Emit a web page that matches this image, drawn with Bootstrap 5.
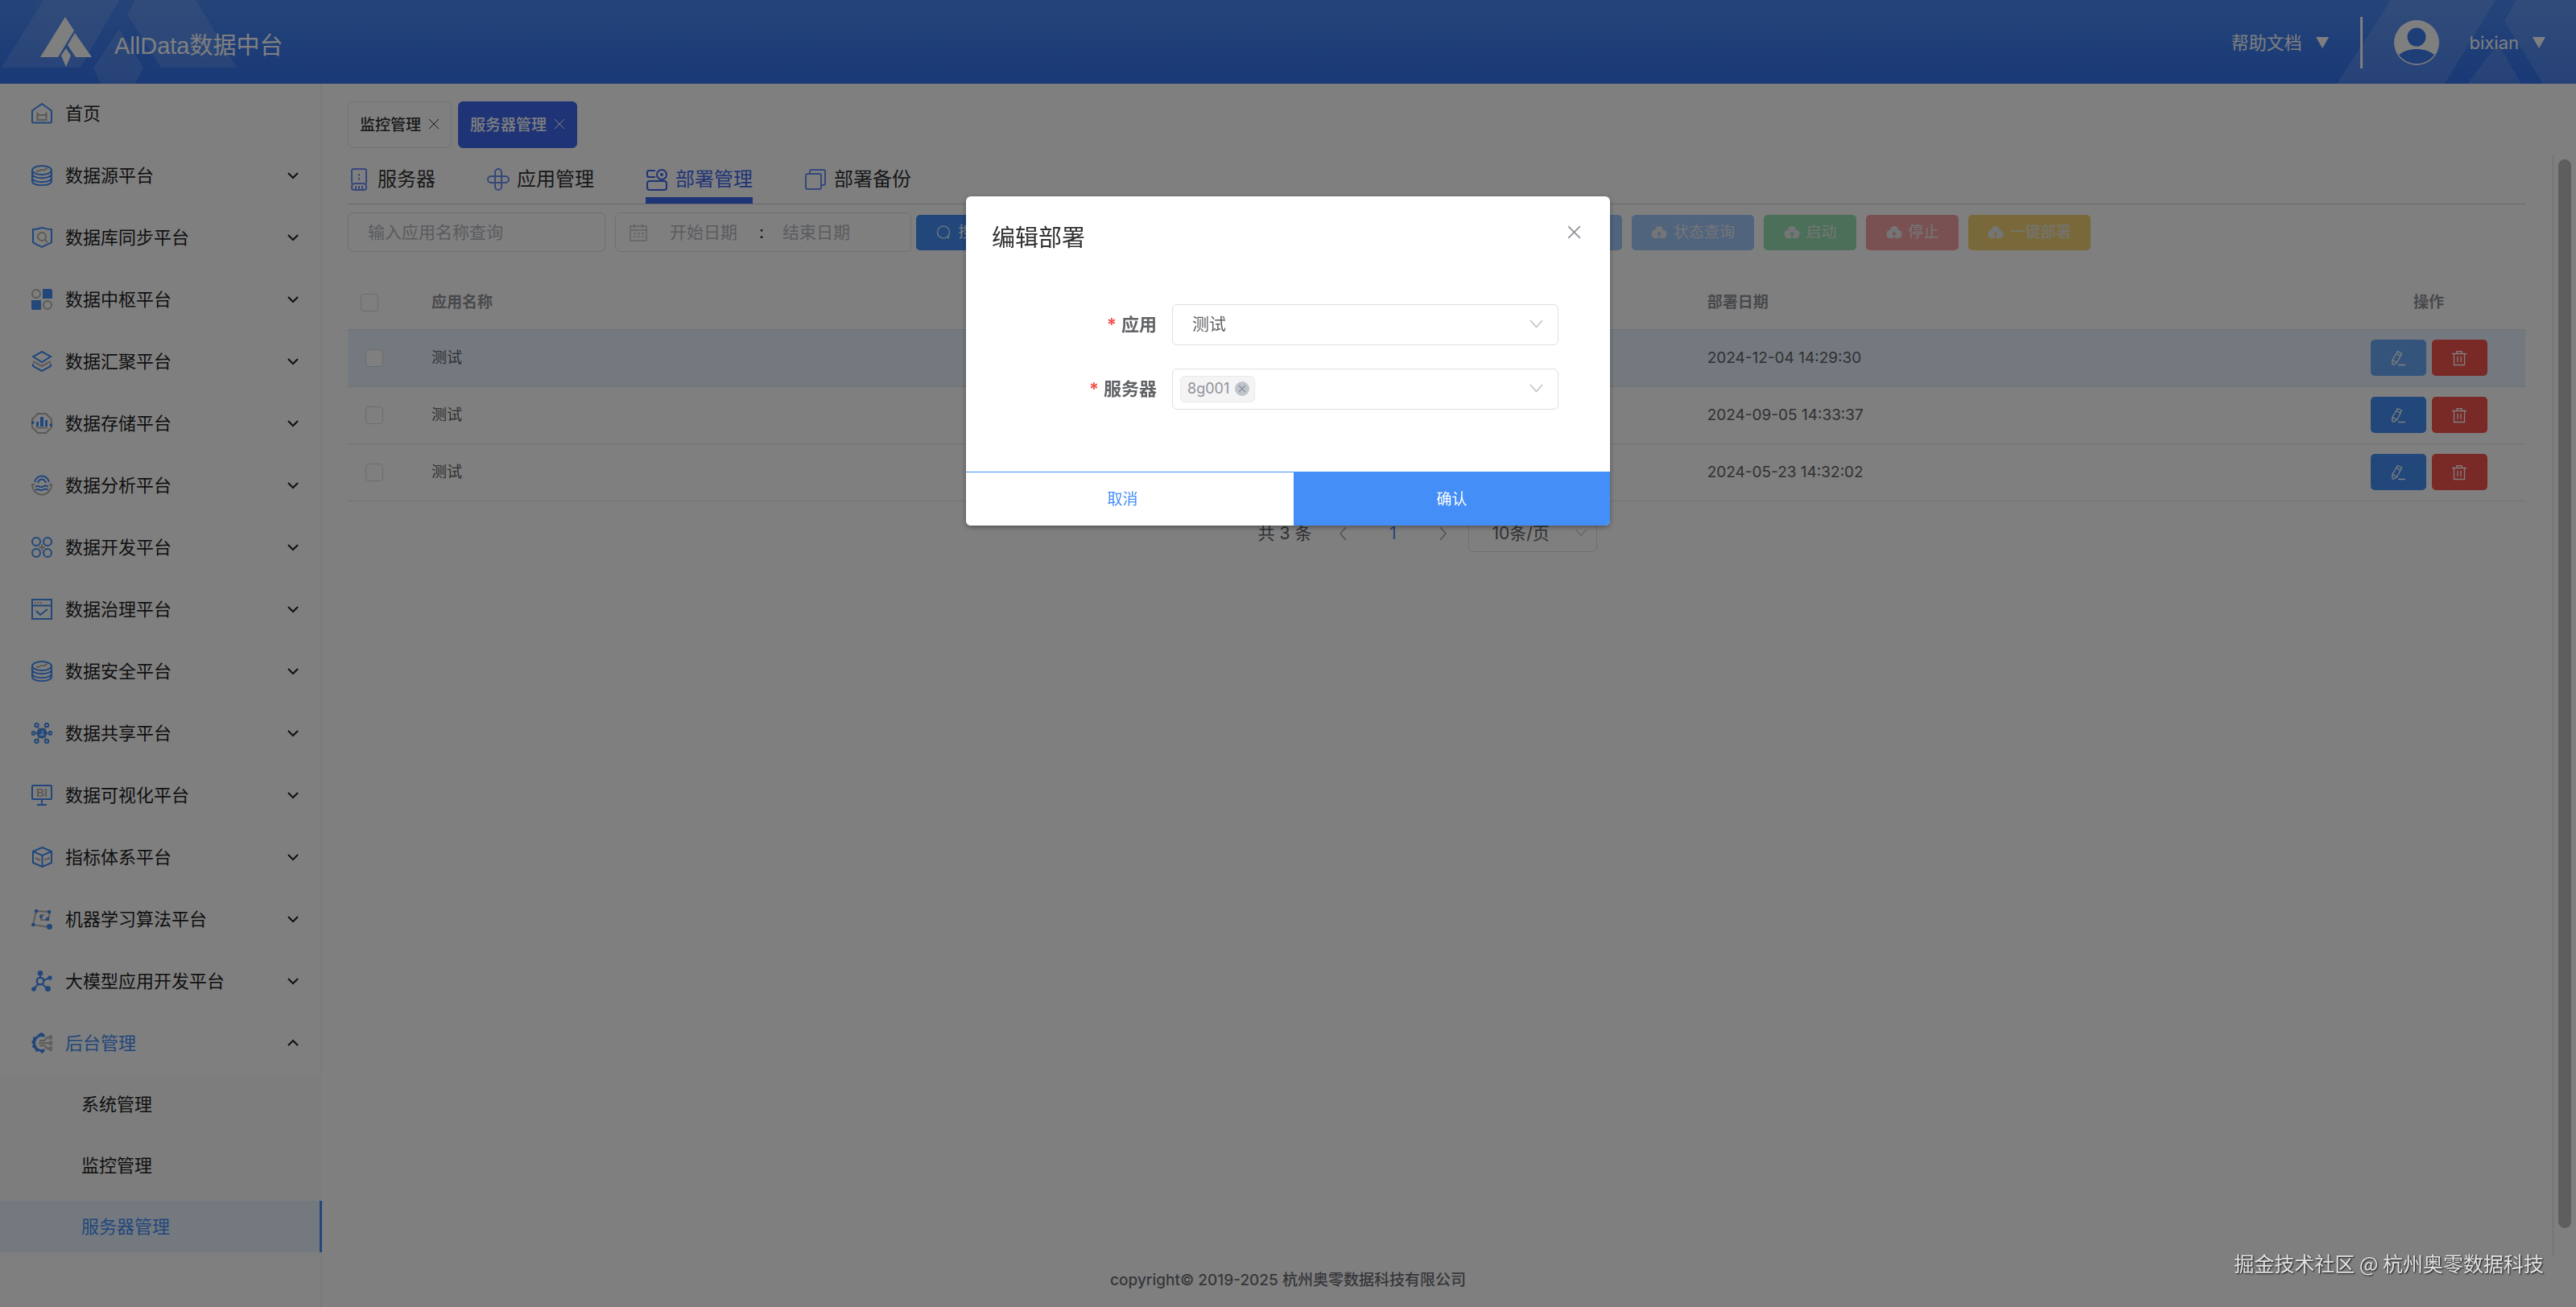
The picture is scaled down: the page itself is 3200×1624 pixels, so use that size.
<!DOCTYPE html>
<html lang="zh-CN">
<head>
<meta charset="utf-8">
<meta name="viewport" content="width=device-width, initial-scale=1">
<title>AllData数据中台</title>
<link href="https://cdn.jsdelivr.net/npm/bootstrap@5.3.0/dist/css/bootstrap.min.css" rel="stylesheet">
<style>
:root{--brand:#448ef7;--royal:#3f69ee;--ink:#303133;--soft:#606266;--pale:#909399;--line:#dcdfe6}
body{font-family:Inter,"Noto Sans CJK SC",sans-serif;font-size:22px;line-height:32px;color:#1f1f1f;background:#fff;overflow:hidden}
a{color:inherit;text-decoration:none}
svg{flex:none;display:block}
.ic{width:26px;height:26px;fill:none;stroke:#448ef7;stroke-width:2}
.ic .g{stroke:#b8b4ae}.ic .bf{fill:#448ef7;stroke:none}
.ic text{font:700 14px "Liberation Sans",sans-serif;fill:#b8b4ae;stroke:none}
/* top bar */
.topbar{height:104px;background:linear-gradient(#4a89f3,#3372ee);color:#fff;position:relative;overflow:hidden}
.topbar>svg.deco{position:absolute;top:0;fill:#fff;opacity:.13}
.topbar>div{position:relative}
.topbar .links{padding:2px 38px 0 0}
.brand-name{font-size:29px;line-height:40px;font-family:"Liberation Sans","Noto Sans CJK SC",sans-serif;margin-left:28px;padding-top:10px}
.tri{width:0;height:0;border:8px solid transparent;border-top:14px solid #fff;border-bottom:0}
.split{width:3px;height:64px;background:#fff}
/* side menu */
.side{width:400px;border-right:2px solid #f0f0f0}
.side>ul{margin-top:-2px}
.side-link{height:77px;padding:0 27px 0 39px;gap:16px}
.side-link .arr{width:14px;height:10px;fill:none;stroke:#1f1f1f;stroke-width:2}
.sub{background:#fafafa;margin-right:-2px}
.sub a{display:flex;align-items:center;height:64px;padding-left:101px;margin:6px 0}
.sub a.now{background:#e8f3ff;color:var(--brand);border-right:3px solid var(--brand)}
.sub li{display:flow-root}
/* content */
.work{padding:22px 33px 0 32px}
.tag-tab{height:58px;border:1px solid #e4e4e4;border-radius:6px;background:#fff;padding:2px 14px 0;gap:9px;font-size:19px;font-weight:500;color:var(--ink)}
.tag-tab.now{background:var(--royal);border-color:var(--royal);color:#fff}
.tag-tab svg{width:14px;height:14px;stroke:currentColor;stroke-width:1;fill:none;margin-top:-4px}
.tabs-line{border-bottom:1px solid #cfd3da;gap:64px;margin-top:20px}
.tabs-line a{display:flex;align-items:center;gap:9px;font-size:24px;line-height:36px;height:49px;padding-bottom:12px;color:var(--ink);border-bottom:0 solid var(--royal)}
.tabs-line a.now{color:var(--royal);border-bottom-width:8px;padding-bottom:4px}
.tabs-line svg{width:28px;height:28px;fill:none;stroke:#6e8ff5;stroke-width:2}
.tabs-line .now svg{stroke:var(--royal)}
.filters{gap:6px;margin-top:10px}
.gap12{gap:12px}
.field{height:49px;border:1px solid var(--line);border-radius:6px;font-size:21px;color:var(--soft);background:#fff}
.field::placeholder,.field input::placeholder{color:#b4b8c0;opacity:1}
.q-name{width:320px;padding:0 24px}
.q-date{width:368px;padding:0 24px 0 16px}
.q-date input{border:0;width:100px;background:none;padding:0;outline:0}
.q-date svg{width:24px;height:24px;fill:none;stroke:#c0c4cc;stroke-width:1.4}
.act{height:44px;min-width:115px;padding:0 24px;border:0;border-radius:5px;font-size:19px;line-height:28px;gap:8px;color:#fff;opacity:1!important}
.act svg{width:20px;height:20px;fill:currentColor}
.a-main{background:var(--brand)!important}.a-info{background:#a1c9fb!important}.a-ok{background:#97dfb0!important}
.a-stop{background:#f5a3a5!important}.a-warn{background:#f3d274!important}
.a-info,.a-ok,.a-stop,.a-warn{color:#e9ebee!important}
.grid{table-layout:fixed;margin:29px 0 0;font-size:19px;line-height:28px;--bs-table-bg:transparent}
.grid th,.grid td{padding:0 16px;height:71px;border-bottom:1px solid #dfe4ea;vertical-align:middle;color:var(--soft)}
.grid th{height:67px;padding-top:2px;color:var(--pale);font-weight:700}
.grid .c-tick{width:88px;padding-left:22px}.grid th.c-tick{padding-left:16px}
.grid .c-act{width:240px;text-align:center}
.grid tr.hot td{background:#e8f3ff}
.tick{appearance:none;display:block;width:22px;height:22px;border:1px solid #d5d8de;border-radius:4px;background:#fff;margin:0}
.op{width:69px;height:45px;border:0;border-radius:5px;padding:0;background:var(--brand)}
.op.del{background:#f2544f}.op.hov{background:#69a9f9}
.op svg{width:20px;height:20px;margin:auto;fill:none;stroke:#fff;stroke-width:1.3}
.pager{font-size:21px;color:var(--soft);margin-top:17px;padding-right:22px}
.pager .step{border:0;background:none;width:40px;height:44px;padding:0}
.pager .step svg{width:9px;height:18px;margin:auto;fill:none;stroke:#a0a4ab;stroke-width:1.5}
.drop{position:relative}
.drop select,.drop .multi{appearance:none;width:100%;border:1px solid var(--line);border-radius:6px;background:#fff;color:var(--soft);font-size:21px;outline:0}
.drop>svg{position:absolute;right:19px;top:50%;margin-top:-6px;width:17px;height:11px;fill:none;stroke:#c0c4cc;stroke-width:1.5;pointer-events:none}
.per{width:160px;margin-left:12px}.per select{height:46px;padding:0 0 0 28px}.per>svg{right:13px;width:14px;height:10px}
.foot{font-size:19px;font-weight:500;color:#6b6e75;padding:0 370px 17px 0;line-height:32px}
.rail{width:30px;margin:88px 0 64px;border-left:3px solid #f0f0f0;padding:6px 6px 34px 5px}
.rail div{background:#bdbdbd;border-radius:8px;width:16px}
/* dialog */
.modal-dialog{max-width:800px;margin:15vh auto 0}
.modal-content{border:0;border-radius:6px;overflow:hidden;box-shadow:0 2px 6px rgba(0,0,0,.35);color:var(--ink)}
.dlg-title{font-size:29px;line-height:40px;color:var(--ink);font-weight:400}
.dlg-head{padding:32px 36px 0 32px;height:134px}
.x-btn{border:0;background:none;padding:0;margin-top:4px}
.x-btn svg{width:17px;height:17px;stroke:#909399;stroke-width:1.5}
.dlg-form{padding:0 64px 77px 32px;gap:29px}
.dlg-form label{width:205px;text-align:right;font-weight:700;color:var(--soft);font-size:22px}
.dlg-form label::before{content:"*";color:#f0584f;margin-right:6px}
.dlg-form .drop{width:480px}
.dlg-form select{height:51px;padding:0 24px}
.multi{height:51px;padding:0 9px}
.chip{height:33px;border:1px solid #e9e9eb;background:#f4f4f5;color:var(--pale);border-radius:6px;padding:0 6px 0 8px;gap:7px;font-size:18px;line-height:30px}
.chip button{width:18px;height:18px;border:0;border-radius:50%;background:#c0c4cc;padding:0}
.chip svg{width:18px;height:18px;stroke:#8b8e94;stroke-width:1.2}
.dlg-foot button{height:67px;border:0;border-top:1px solid var(--brand);border-radius:0;font-size:19px;padding:2px 0 0}
.dlg-foot .b-no{width:407px;background:#fff;color:var(--brand);padding-right:18px}.b-yes{background:var(--brand);color:#fff}
.stamp{position:fixed;right:40px;bottom:36px;z-index:1090;font:25px/38px "Noto Sans CJK SC",sans-serif;color:#e3e3e3;text-shadow:1px 1px 2px #111}
</style>
<script src="https://cdn.jsdelivr.net/npm/bootstrap@5.3.0/dist/js/bootstrap.bundle.min.js"></script>
</head>
<body>
<svg class="d-none">
<symbol id="down" viewBox="0 0 14 10"><path d="M1 2l6 6 6-6"/></symbol>
<symbol id="up" viewBox="0 0 14 10"><path d="M1 8l6-6 6 6"/></symbol>
<symbol id="vee" viewBox="0 0 17 11"><path d="M1 1l7.500 8.500L16 1"/></symbol>
<symbol id="x" viewBox="0 0 14 14"><path d="M1 1l12 12M13 1L1 13"/></symbol>
<symbol id="cloud" viewBox="0 0 20 20"><path fill-rule="evenodd" d="M10 2a5 5 0 0 1 4.900 4.500A5.200 5.200 0 0 1 19.500 12c0 3-2 5-5 5h-3.800v-4.500h2.500L10 8.800l-3.200 3.700h2.500V17H5.500c-3 0-5-2-5-5a5.200 5.200 0 0 1 4.600-5.500A5 5 0 0 1 10 2z"/></symbol>
<symbol id="pen" viewBox="0 0 20 20"><path d="M9.500 1.500l5 2.800-6 11.400-4.300 2.500-1.700-1.500.7-4.800zM8 4.500l5 2.800M3 12.500l5.500 3M10 18.500h9"/></symbol>
<symbol id="bin" viewBox="0 0 20 20"><path d="M1 4.500h18M3.500 4.500v14h13v-14M7 4V1.700h6V4M8 8v7M12 8v7"/></symbol>
<symbol id="disks" viewBox="0 0 26 26"><ellipse cx="13" cy="6.500" rx="12" ry="5.500"/><path d="M1 6.500v4.500c0 7 24 7 24 0V6.500M1 11v5c0 7 24 7 24 0v-5M1 16v4c0 7 24 7 24 0v-4"/></symbol>
</svg>

<div class="d-flex flex-column vh-100">
<header class="topbar d-flex align-items-center justify-content-between flex-shrink-0">
  <svg class="deco start-0" width="300" height="104"><path d="M54 0h94L100 84H2zM168 0h75l51 84h-94L158 18zM148 36l30 48-10 20h-43l-9-20z"/></svg>
  <svg class="deco end-0" width="300" height="104"><path d="M70 0h130l-63 104H3zM226 0h74v104h-41L211 26zM203 54l29 50h-67z"/></svg>
  <div class="d-flex align-items-center" style="padding-left:50px">
    <svg width="64" height="62" viewBox="0 0 64 62" fill="#fff"><path d="M31 0l11 17-20 33H0zM43 20l21 30H44L34 35zM32 39l6 9-6 14-6-14z"/></svg>
    <span class="brand-name">AllData数据中台</span>
  </div>
  <div class="links d-flex align-items-center">
    <a href="#">帮助文档</a><span class="tri" style="margin-left:17px"></span>
    <span class="split" style="margin:0 39px"></span>
    <svg width="56" height="56" viewBox="0 0 56 56"><circle cx="28" cy="28" r="28" fill="#fff"/><circle cx="28" cy="21" r="11.500" fill="#3c7cf0"/><path d="M6 43c11-9.500 33-9.500 44 0a27 27 0 0 1-44 0z" fill="#3c7cf0"/></svg>
    <a href="#" style="margin-left:38px">bixian</a><span class="tri" style="margin-left:17px"></span>
  </div>
</header>

<div class="d-flex flex-grow-1" style="min-height:0">
<nav class="side flex-shrink-0">
<ul class="list-unstyled mb-0">
<li><a href="#" class="side-link d-flex align-items-center"><svg class="ic" viewBox="0 0 26 26"><path d="M1 9.500L13 1l12 8.500V23a1.500 1.500 0 0 1-1.500 1.500h-21A1.500 1.500 0 0 1 1 23z"/><path class="g" d="M7.500 13v8h11v-8l-2 2h-7z"/></svg><span>首页</span></a></li>
<li><a href="#" class="side-link d-flex align-items-center"><svg class="ic" viewBox="0 0 26 26"><use href="#disks"/><path class="g" d="M6 7c3 3 5-2 8-1s3-1 6-2"/></svg><span>数据源平台</span><svg class="arr ms-auto"><use href="#down"/></svg></a></li>
<li><a href="#" class="side-link d-flex align-items-center"><svg class="ic" viewBox="0 0 26 26"><path d="M2 3c7 0 8-2 11-2s4 2 12 2v16c-4 3-7 3-12 6-5-3-8-3-11-6z"/><circle class="g" cx="13" cy="12" r="5"/><path class="g" d="M16.500 15.500L20 19"/></svg><span>数据库同步平台</span><svg class="arr ms-auto"><use href="#down"/></svg></a></li>
<li><a href="#" class="side-link d-flex align-items-center"><svg class="ic" viewBox="0 0 26 26"><path class="bf" d="M14 0h10a2 2 0 0 1 2 2v10H14zM0 14h12v12H2a2 2 0 0 1-2-2z"/><circle class="g" cx="6" cy="6" r="5"/><circle class="g" cx="20" cy="20" r="5"/></svg><span>数据中枢平台</span><svg class="arr ms-auto"><use href="#down"/></svg></a></li>
<li><a href="#" class="side-link d-flex align-items-center"><svg class="ic" viewBox="0 0 26 26"><path class="g" d="M2 13l11 6 11-6"/><path d="M13 1l11 6-11 7L2 7zM2 16v3l11 6 11-6v-3"/></svg><span>数据汇聚平台</span><svg class="arr ms-auto"><use href="#down"/></svg></a></li>
<li><a href="#" class="side-link d-flex align-items-center"><svg class="ic" viewBox="0 0 26 26"><path class="g" d="M8 1h10l7 7v10l-7 7H8l-7-7V8z"/><path class="bf" d="M6 11h3v6H6zM11 5h4v12h-4zM17 9h3v8h-3z"/><path class="g" d="M6 18.500h14"/><circle class="bf" cx="1.500" cy="12" r="2"/><circle class="bf" cx="24.500" cy="15" r="2"/></svg><span>数据存储平台</span><svg class="arr ms-auto"><use href="#down"/></svg></a></li>
<li><a href="#" class="side-link d-flex align-items-center"><svg class="ic" viewBox="0 0 26 26"><path d="M4 9c3-10 15-10 18 0M8 10c2-6 8-6 10 0M5 15c4-3 5 1 8 0s5-3 8 0M5 19c4-3 5 1 8 0s5-3 8 0"/><path class="g" d="M4 12H1c1 17 23 17 24 0h-3"/></svg><span>数据分析平台</span><svg class="arr ms-auto"><use href="#down"/></svg></a></li>
<li><a href="#" class="side-link d-flex align-items-center"><svg class="ic" viewBox="0 0 26 26"><circle cx="6" cy="6" r="5"/><circle cx="20" cy="6" r="5"/><circle cx="6" cy="20" r="5"/><circle cx="20" cy="20" r="5"/><path class="g" d="M13 9v8M9 13h8"/></svg><span>数据开发平台</span><svg class="arr ms-auto"><use href="#down"/></svg></a></li>
<li><a href="#" class="side-link d-flex align-items-center"><svg class="ic" viewBox="0 0 26 26"><path d="M1 1h24v24H1zM1 8.500h24M6 15l5 5 9-7"/><path class="g" d="M4 5h2M7.500 5h2M11 5h2"/></svg><span>数据治理平台</span><svg class="arr ms-auto"><use href="#down"/></svg></a></li>
<li><a href="#" class="side-link d-flex align-items-center"><svg class="ic" viewBox="0 0 26 26"><use href="#disks"/><path class="g" d="M6 7c3 3 5-2 8-1s3-1 6-2"/></svg><span>数据安全平台</span><svg class="arr ms-auto"><use href="#down"/></svg></a></li>
<li><a href="#" class="side-link d-flex align-items-center"><svg class="ic" viewBox="0 0 26 26"><path class="g" d="M7 4l12 18M19 4L7 22M3 13h20"/><circle class="bf" cx="13" cy="13" r="6.500"/><circle cx="6.500" cy="3" r="2.200"/><circle cx="19" cy="3" r="2.200"/><circle cx="2.500" cy="13" r="2"/><circle cx="23.500" cy="13" r="2"/><circle cx="6.500" cy="23" r="2.200"/><circle cx="19" cy="23" r="2.200"/><path d="M13 9.500a1.800 1.800 0 0 1 0 4c-2 0-3 1-3 2.500h6c0-1.500-1-2.500-3-2.500" style="fill:#c9dffc;stroke:none"/></svg><span>数据共享平台</span><svg class="arr ms-auto"><use href="#down"/></svg></a></li>
<li><a href="#" class="side-link d-flex align-items-center"><svg class="ic" viewBox="0 0 26 26"><rect x="1" y="1" width="24" height="17" rx="1"/><path d="M13 18v6M7 25h12"/><text x="13" y="15" text-anchor="middle">BI</text></svg><span>数据可视化平台</span><svg class="arr ms-auto"><use href="#down"/></svg></a></li>
<li><a href="#" class="side-link d-flex align-items-center"><svg class="ic" viewBox="0 0 26 26"><path d="M13.500 1L25 6v14l-11.500 5L2 20V6zM2 6l11.500 5L25 6M13.500 11v14"/><path class="g" d="M5 14l6 3M16 16l6-1-1-2"/></svg><span>指标体系平台</span><svg class="arr ms-auto"><use href="#down"/></svg></a></li>
<li><a href="#" class="side-link d-flex align-items-center"><svg class="ic" viewBox="0 0 26 26"><path class="g" d="M22 23L2 20 6 3l17 1-2 10h-9V8h4"/><circle class="bf" cx="6" cy="3" r="2.300"/><circle class="bf" cx="22" cy="4" r="2.300"/><circle class="bf" cx="2.300" cy="20" r="2.300"/><circle class="bf" cx="20" cy="13" r="2.300"/><circle class="bf" cx="12" cy="10" r="2"/><circle class="bf" cx="22.500" cy="22.500" r="3.500"/></svg><span>机器学习算法平台</span><svg class="arr ms-auto"><use href="#down"/></svg></a></li>
<li><a href="#" class="side-link d-flex align-items-center"><svg class="ic" viewBox="0 0 26 26"><path d="M11 4v5M15 12l8-3M8 17l-5 6M14 17l6 6"/><circle cx="11" cy="13" r="4.300" stroke-width="2.400"/><circle class="bf" cx="11" cy="3.300" r="3.300"/><circle class="bf" cx="23" cy="9" r="2.700"/><circle class="bf" cx="3" cy="23" r="2.800"/><circle class="bf" cx="20.500" cy="22.500" r="3.500"/></svg><span>大模型应用开发平台</span><svg class="arr ms-auto"><use href="#down"/></svg></a></li>
<li><a href="#" class="side-link d-flex align-items-center" style="color:var(--brand)"><svg class="ic" viewBox="0 0 26 26"><path class="bf" d="M10 1l3-1 3 2 1 4a8 8 0 1 0 0 14l-1 4-3 2-3-3-4 1-2-4-3-2 1-4-2-2 2-3 0-3 4-1z"/><path class="g" d="M10 10h6l4-4h2M9 13h13M10 16h6l4 4h2"/><circle class="g" cx="24" cy="6" r="1.700"/><circle class="g" cx="24" cy="13" r="1.700"/><circle class="g" cx="24" cy="20" r="1.700"/></svg><span>后台管理</span><svg class="arr ms-auto"><use href="#up"/></svg></a>
  <ul class="sub list-unstyled mb-0"><li><a href="#">系统管理</a></li><li><a href="#">监控管理</a></li><li><a href="#" class="now">服务器管理</a></li></ul></li>
</ul>
</nav>

<main class="d-flex flex-column flex-grow-1" style="min-width:0">
<div class="work flex-grow-1">
  <div class="d-flex" style="gap:8px">
    <button class="tag-tab d-flex align-items-center">监控管理<svg><use href="#x"/></svg></button>
    <button class="tag-tab now d-flex align-items-center">服务器管理<svg><use href="#x"/></svg></button>
  </div>
  <nav class="tabs-line d-flex">
    <a href="#"><svg viewBox="0 0 28 28"><path d="M5 19V3a2 2 0 0 1 2-2h14a2 2 0 0 1 2 2v16M14 7v2.500M14 12v2.500"/><path d="M5 22a4 4 0 0 1 4-3h10a4 4 0 0 1 4 3v2a3 3 0 0 1-3 3H8a3 3 0 0 1-3-3zM10 22v4M14 22v4M18 22v4"/></svg>服务器</a>
    <a href="#"><svg viewBox="0 0 28 28"><path d="M11 18h-6a4 4 0 0 1 0-8h12M18 11V5a4 4 0 0 0-8 0v12M17 10h6a4 4 0 0 1 0 8H11M10 17v6a4 4 0 0 0 8 0V11"/></svg>应用管理</a>
    <a href="#" class="now"><svg viewBox="0 0 28 28"><path d="M12 3H4a2 2 0 0 0-2 2v4a2 2 0 0 0 2 2h8"/><circle cx="20" cy="8" r="6"/><circle cx="20" cy="8" r="1"/><rect x="2" y="16" width="24" height="11" rx="3"/></svg>部署管理</a>
    <a href="#"><svg viewBox="0 0 28 28"><rect x="2" y="7" width="19" height="19" rx="2"/><path d="M7 6V4a2 2 0 0 1 2-2h15a2 2 0 0 1 2 2v15a2 2 0 0 1-2 2h-2"/></svg>部署备份</a>
  </nav>
  <form class="filters d-flex align-items-center">
    <div class="d-flex gap12">
      <input class="field q-name" aria-label="应用名称" placeholder="输入应用名称查询">
      <div class="field q-date d-flex align-items-center">
        <svg viewBox="0 0 24 24"><path d="M2 4h20v18H2zM2 9h20M7 1v5M17 1v5M6 13h3M11 13h3M16 13h3M6 17h3M11 17h3M16 17h3"/></svg>
        <input aria-label="开始日期" placeholder="开始日期" style="margin-left:27px"><span class="text-dark" style="margin:0 23px 0 11px">:</span><input aria-label="结束日期" placeholder="结束日期">
      </div>
    </div>
    <div class="d-flex gap12">
      <button type="button" class="btn act a-main d-flex align-items-center justify-content-center"><svg viewBox="0 0 20 20" style="fill:none;stroke:#fff;stroke-width:1.2"><circle cx="10" cy="9.500" r="7.500"/><path d="M15 15l2 2"/></svg>搜索</button>
      <button type="button" aria-label="重置" class="btn act a-warn d-flex align-items-center justify-content-center"><svg><use href="#cloud"/></svg></button>
      <button type="button" aria-label="新增" class="btn act a-main d-flex align-items-center justify-content-center"><svg><use href="#cloud"/></svg></button>
      <button type="button" aria-label="修改" class="btn act a-ok d-flex align-items-center justify-content-center"><svg><use href="#cloud"/></svg></button>
      <button type="button" aria-label="删除" class="btn act a-stop d-flex align-items-center justify-content-center"><svg><use href="#cloud"/></svg></button>
      <button type="button" aria-label="导出" class="btn act a-warn d-flex align-items-center justify-content-center"><svg><use href="#cloud"/></svg></button>
      <button type="button" aria-label="还原" disabled class="btn act a-info d-flex align-items-center justify-content-center"><svg><use href="#cloud"/></svg></button>
      <button type="button" disabled class="btn act a-info d-flex align-items-center justify-content-center"><svg><use href="#cloud"/></svg>状态查询</button>
      <button type="button" disabled class="btn act a-ok d-flex align-items-center justify-content-center"><svg><use href="#cloud"/></svg>启动</button>
      <button type="button" disabled class="btn act a-stop d-flex align-items-center justify-content-center"><svg><use href="#cloud"/></svg>停止</button>
      <button type="button" disabled class="btn act a-warn d-flex align-items-center justify-content-center"><svg><use href="#cloud"/></svg>一键部署</button>
    </div>
  </form>
  <table class="table grid">
    <thead><tr><th class="c-tick"><input type="checkbox" class="tick" aria-label="全选"></th><th>应用名称</th><th></th><th>部署日期</th><th class="c-act">操作</th></tr></thead>
    <tbody>
    <tr class="hot"><td class="c-tick"><input type="checkbox" class="tick" aria-label="选择"></td><td>测试</td><td></td><td>2024-12-04 14:29:30</td><td class="c-act"><div class="d-flex justify-content-center" style="gap:7px"><button class="op hov" aria-label="编辑"><svg><use href="#pen"/></svg></button><button class="op del" aria-label="删除"><svg><use href="#bin"/></svg></button></div></td></tr>
    <tr><td class="c-tick"><input type="checkbox" class="tick" aria-label="选择"></td><td>测试</td><td></td><td>2024-09-05 14:33:37</td><td class="c-act"><div class="d-flex justify-content-center" style="gap:7px"><button class="op" aria-label="编辑"><svg><use href="#pen"/></svg></button><button class="op del" aria-label="删除"><svg><use href="#bin"/></svg></button></div></td></tr>
    <tr><td class="c-tick"><input type="checkbox" class="tick" aria-label="选择"></td><td>测试</td><td></td><td>2024-05-23 14:32:02</td><td class="c-act"><div class="d-flex justify-content-center" style="gap:7px"><button class="op" aria-label="编辑"><svg><use href="#pen"/></svg></button><button class="op del" aria-label="删除"><svg><use href="#bin"/></svg></button></div></td></tr>
    </tbody>
  </table>
  <div class="pager d-flex justify-content-center align-items-center">
    <span style="margin-right:19px">共 3 条</span>
    <button class="step" aria-label="上一页"><svg viewBox="0 0 9 18"><path d="M8 1L1 9l7 8"/></svg></button>
    <a href="#" class="text-center" style="width:84px;color:var(--brand)">1</a>
    <button class="step" aria-label="下一页"><svg viewBox="0 0 9 18"><path d="M1 1l7 8-7 8"/></svg></button>
    <div class="drop per"><select aria-label="每页条数"><option>10条/页</option></select><svg><use href="#vee"/></svg></div>
  </div>
</div>
<footer class="foot text-center">copyright© 2019-2025 杭州奥零数据科技有限公司</footer>
</main>
<div class="rail d-flex flex-shrink-0"><div></div></div>
</div>
</div>

<div class="modal-backdrop show"></div>
<div class="modal d-block" role="dialog" aria-labelledby="dlgTitle">
  <div class="modal-dialog">
    <div class="modal-content">
      <div class="dlg-head d-flex justify-content-between align-items-start">
        <h1 class="dlg-title m-0" id="dlgTitle">编辑部署</h1>
        <button class="x-btn" aria-label="关闭"><svg><use href="#x"/></svg></button>
      </div>
      <form class="dlg-form d-flex flex-column">
        <div class="d-flex align-items-center" style="gap:19px"><label for="app">应用</label><div class="drop"><select id="app"><option>测试</option></select><svg><use href="#vee"/></svg></div></div>
        <div class="d-flex align-items-center" style="gap:19px"><label for="srv">服务器</label><div class="drop"><div class="multi d-flex align-items-center"><span class="chip d-flex align-items-center">8g001<button type="button" aria-label="移除"><svg viewBox="0 0 18 18"><path d="M5 5l8 8M13 5l-8 8"/></svg></button></span><input id="srv" class="border-0 flex-grow-1" style="outline:0"></div><svg><use href="#vee"/></svg></div></div>
      </form>
      <div class="dlg-foot d-flex"><button class="b-no">取消</button><button class="b-yes flex-grow-1">确认</button></div>
    </div>
  </div>
</div>
<div class="stamp">掘金技术社区 @ 杭州奥零数据科技</div>
</body>
</html>
